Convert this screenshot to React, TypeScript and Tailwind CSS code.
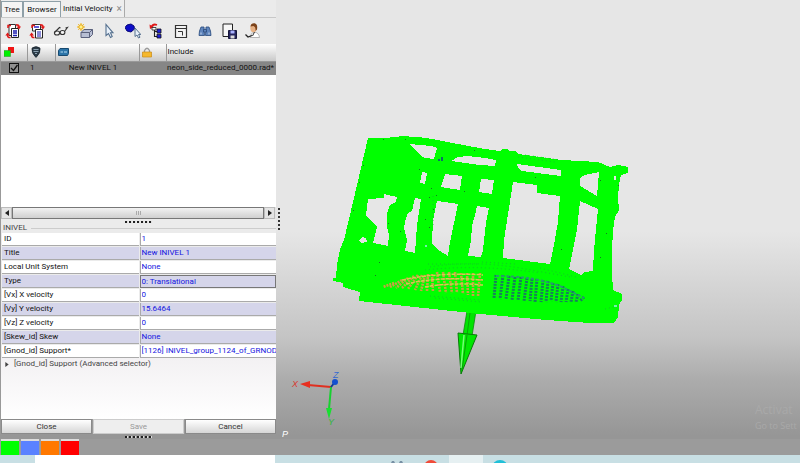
import type { ReactNode } from "react";

const fields = [
  { id: "id", label: "ID", value: "1" },
  { id: "title", label: "Title", value: "New INIVEL 1" },
  { id: "unit", label: "Local Unit System", value: "None" },
  { id: "type", label: "Type", value: "0: Translational", active: true },
  { id: "vx", label: "[Vx] X velocity", value: "0" },
  { id: "vy", label: "[Vy] Y velocity", value: "15.6464" },
  { id: "vz", label: "[Vz] Z velocity", value: "0" },
  { id: "skew", label: "[Skew_id] Skew", value: "None" },
  { id: "gnod", label: "[Gnod_id] Support*", value: "[1126] INIVEL_group_1124_of_GRNOD" },
];

const swatches = [
  { name: "Green", color: "bg-[#00ff00]" },
  { name: "Blue", color: "bg-[#5a82ff]" },
  { name: "Orange", color: "bg-[#ff7800]" },
  { name: "Red", color: "bg-[#ff0000]" },
];

function Icon({ children }: { children: ReactNode }) {
  return (
    <svg viewBox="0 0 16 16" className="block h-4 w-4" fill="none" aria-hidden="true">
      {children}
    </svg>
  );
}

const redArrows = (
  <>
    <path d="M3 5 V2.5 H6" stroke="#e01818" strokeWidth="1.5" />
    <path d="M11 2 Q14 1.5 14 4" stroke="#e01818" strokeWidth="1.6" />
    <path d="M11.5 3.5 H16 L14 6.5Z" fill="#e01818" />
    <path d="M5.5 14.5 Q2.5 15 2.5 12" stroke="#e01818" strokeWidth="1.6" />
    <path d="M.3 12.5 H5 L2.6 9.5Z" fill="#e01818" />
  </>
);

const tools = [
  {
    name: "Import list",
    art: (
      <>
        <path d="M4 1.5 H10.5 V12.5 H4Z" fill="#fff" stroke="#333" />
        <path d="M6.5 5.5 H13.5 V14.5 H6.5Z" fill="#fff" stroke="#222" />
        <path d="M8 8 H12 M8 10 H12 M8 12.5 H12" stroke="#1b1bb0" strokeWidth="1.3" />
        {redArrows}
      </>
    ),
  },
  {
    name: "Export list",
    art: (
      <>
        <path d="M3.5 1.5 H11.5 V8 H3.5Z" fill="#fff" stroke="#333" />
        <path d="M5 4 H10" stroke="#2a2ad0" strokeWidth="1.5" />
        <path d="M6.5 6.5 H13.5 V15 H6.5Z" fill="#fff" stroke="#222" />
        <path d="M8 9 H12 M8 11 H12 M8 13 H12" stroke="#1b1bb0" strokeWidth="1.2" />
        {redArrows}
      </>
    ),
  },
  {
    name: "View",
    art: (
      <g stroke="#333" strokeWidth="1.1">
        <ellipse cx="4" cy="10" rx="2.6" ry="2" fill="#f5f5f5" />
        <ellipse cx="9.5" cy="9.5" rx="2.4" ry="2" fill="#f5f5f5" />
        <path d="M6.5 9.5 Q7 8.5 7.5 9 M1.5 9.5 L6.5 4.5 L7.5 5 M11.5 8.5 L14.5 4.5 L12.5 5" />
      </g>
    ),
  },
  {
    name: "Create",
    art: (
      <>
        <path d="M4 9.5 L7 6.5 H15.5 V11.5 L12.5 14.5 H4Z" fill="#b8bfd4" stroke="#5a617c" />
        <path d="M4 9.5 H12.5 V14.5 M12.5 9.5 L15.5 6.5" stroke="#5a617c" />
        <path d="M4 0 V8 M0 4 H8 M1.2 1.2 L6.8 6.8 M6.8 1.2 L1.2 6.8" stroke="#efb71d" />
        <circle cx="4" cy="4" r="2.2" fill="#fff08a" stroke="#e8a812" />
      </>
    ),
  },
  {
    name: "Select",
    art: (
      <path
        d="M5 1.5 V12.5 L7.5 10.5 L9.5 14.5 L11.2 13.5 L9.5 9.8 H12Z"
        fill="#e9f1fa"
        stroke="#55708e"
        strokeWidth="1.1"
      />
    ),
  },
  {
    name: "Pick part",
    art: (
      <>
        <path d="M0 4.5 L2 2 L6 1 L9 3 L9.5 6 L6 9 L2 8Z" fill="#0c0cc8" stroke="#080878" />
        <path d="M10 5 V13.5 L12 12 L13.5 15 L15 14.2 L13.5 11.5 H15.8Z" fill="#e9f1fa" stroke="#55708e" />
      </>
    ),
  },
  {
    name: "Tree",
    art: (
      <>
        <path d="M8 2 Q4 .5 2.5 4" stroke="#e01818" strokeWidth="1.8" />
        <path d="M.5 1.5 L1 6 L5 4Z" fill="#e01818" />
        <path d="M5.5 5 V13.5 H8.5 M5.5 8.5 H8.5" stroke="#222" strokeWidth="1.1" />
        <path d="M8 6 H12 V10 H8Z M8 11.2 H12 V15 H8Z" fill="#2020d8" stroke="#111" strokeWidth=".8" />
        <path d="M3 4.5 H7 V7 H3Z" fill="#fff" stroke="#222" strokeWidth=".8" />
      </>
    ),
  },
  {
    name: "Form",
    art: (
      <>
        <path d="M2.5 2.5 H13.5 V14.5 H2.5Z" fill="#f3f3f3" stroke="#333" strokeWidth="1.2" />
        <path d="M2.5 5.5 H13.5 M5 8.5 H9.5 V12.5" stroke="#333" />
      </>
    ),
  },
  {
    name: "Find",
    art: (
      <g fill="#5f85bd" stroke="#284a7c" strokeWidth=".8">
        <path d="M4 4 H7 L7.5 12.5 H2 L2.5 8Z" />
        <path d="M9 4 H12 L13.5 8 L14 12.5 H8.5Z" />
        <path d="M6.5 6.5 H9.5 V9 H6.5Z" />
        <path d="M4 9.5 V11.5 M12 9.5 V11.5" stroke="#e3ecf8" />
      </g>
    ),
  },
  {
    name: "Save",
    art: (
      <>
        <path d="M2 1 H11.5 V13.5 H2Z" fill="#f7f7f7" stroke="#222" />
        <path d="M7.5 7.5 H15.5 V15.5 H7.5Z" fill="#25255e" stroke="#15153a" />
        <path d="M9.5 7.5 H13.5 V10.5 H9.5Z" fill="#aab3ff" />
        <path d="M9.5 12.5 H13.5 V15.5 H9.5Z" fill="#ddd" />
      </>
    ),
  },
  {
    name: "Check model",
    art: (
      <>
        <path d="M5 14.5 Q6 9.5 9 9 Q14 9.5 14.5 14.5Z" fill="#fff" stroke="#999" strokeWidth=".7" />
        <ellipse cx="8.5" cy="5" rx="3.2" ry="4.2" fill="#e7b184" />
        <path d="M5.5 3.5 Q6 0 9.5 .2 Q13 1 12 6.5 L10.5 8 Q11 4 8.5 3Z" fill="#7c431b" />
        <path d="M9.5 9 L7.5 13" stroke="#333" />
        <path d="M.5 11.5 L3 14 L7 12.5" stroke="#222" strokeWidth="1.3" />
      </>
    ),
  },
];

function Dots() {
  return (
    <div className="flex h-[5px] items-center justify-center gap-px" aria-hidden="true">
      {Array.from({ length: 7 }, (_, i) => (
        <span key={i} className="h-[2px] w-[3px] border-r border-[#ddd] bg-[#222]" />
      ))}
    </div>
  );
}

function Tabs() {
  return (
    <div role="tablist" className="flex h-[17px] items-end">
      <button role="tab" className="h-4 w-[22px] border border-b-0 border-[#8fa0a8] bg-[#f4f4f4]">
        Tree
      </button>
      <button role="tab" className="h-4 w-[38px] border border-b-0 border-[#8fa0a8] bg-[#f4f4f4]">
        Browser
      </button>
      <div className="flex h-[17px] items-center gap-1 border-r border-[#aaa] bg-[#eeeeee] px-[2px]">
        <button role="tab" aria-selected="true">
          Initial Velocity
        </button>
        <button aria-label="Close tab" className="text-[10px] text-[#888]">
          ×
        </button>
      </div>
    </div>
  );
}

function EntityTable() {
  return (
    <div className="h-[163px] bg-white">
      <table className="w-full table-fixed border-collapse">
        <colgroup>
          <col className="w-[26px]" />
          <col className="w-[28px]" />
          <col className="w-[84px]" />
          <col className="w-[27px]" />
          <col />
        </colgroup>
        <thead>
          <tr className="h-[17px] bg-linear-to-b from-white to-[#c9c9c9] text-left">
            <th className="border-r border-b border-[#999] p-0 pl-[3px]" aria-label="Color">
              <svg viewBox="0 0 11 10" className="block h-[10px] w-[11px]">
                <path d="M4 0 H10 V6 H4Z" fill="#f01414" />
                <path d="M0 3.5 H6.5 V9.5 H0Z" fill="#00f000" stroke="#2a8c2a" strokeWidth=".5" />
              </svg>
            </th>
            <th className="border-r border-b border-[#999] p-0 pl-[3px]" aria-label="ID">
              <svg viewBox="0 0 10 12" className="block h-3 w-[10px]">
                <path d="M1 2 Q5 -1 9 2 Q10 7 5 11.5 Q0 7 1 2Z" fill="#2b3a46" stroke="#16222c" strokeWidth=".6" />
                <path d="M2.5 3.5 H7.5 M2.5 5.5 H7.5 M4 7.5 H6" stroke="#8ba0b0" />
              </svg>
            </th>
            <th className="border-r border-b border-[#999] p-0 pl-[2px]" aria-label="Title">
              <svg viewBox="0 0 11 8" className="block h-2 w-[11px]">
                <path d="M.5 2.5 L2 .5 H10.5 V5.5 L9.5 7.5 H.5Z" fill="#2c74a8" stroke="#174a70" />
                <path d="M2.5 4 H5 M6 4 H9" stroke="#b4dcf2" />
              </svg>
            </th>
            <th className="border-r border-b border-[#999] p-0 pl-[2px]" aria-label="Locked">
              <svg viewBox="0 0 10 11" className="block h-[11px] w-[10px]">
                <path d="M2.5 6 V3.5 Q5 -1 7.5 3.5 V6" fill="none" stroke="#999" strokeWidth="1.3" />
                <path d="M.5 5 H9.5 V10 H.5Z" fill="#f5b82e" stroke="#c98a15" strokeWidth=".7" />
              </svg>
            </th>
            <th className="border-b border-[#999] p-0 pl-px font-normal">Include</th>
          </tr>
        </thead>
        <tbody>
          <tr className="h-[14px] bg-[#868686]">
            <td className="p-0 pl-2">
              <label className="grid h-[10px] w-[10px]">
                <input
                  type="checkbox"
                  defaultChecked
                  aria-label="Show New INIVEL 1"
                  className="peer col-start-1 row-start-1 appearance-none border border-[#111] bg-[#909090]"
                />
                <svg viewBox="0 0 10 10" className="col-start-1 row-start-1 hidden h-[10px] w-[10px] peer-checked:block">
                  <path d="M2 5 L4.5 7.5 L8.5 2" fill="none" stroke="#111" strokeWidth="1.3" />
                </svg>
              </label>
            </td>
            <td className="p-0 pl-[3px]">1</td>
            <td className="p-0 pr-2 text-center">New INIVEL 1</td>
            <td className="p-0" />
            <td className="p-0 pr-[2px] text-right">neon_side_reduced_0000.rad*</td>
          </tr>
        </tbody>
      </table>
    </div>
  );
}

function ScrollBar() {
  return (
    <div className="flex h-3 bg-[#e4e4e4] pr-px leading-none">
      <button aria-label="Scroll left" className="flex w-[11px] items-center justify-center border border-[#bbb]">
        <svg viewBox="0 0 4 6" className="h-[6px] w-1">
          <path d="M4 0 V6 L0 3Z" fill="#222" />
        </svg>
      </button>
      <div className="flex flex-1 items-center justify-center gap-px border border-[#777] bg-linear-to-b from-[#f2f2f2] to-[#d0d0d0]">
        <span className="h-1 w-px bg-[#aaa]" />
        <span className="h-1 w-px bg-[#aaa]" />
        <span className="h-1 w-px bg-[#aaa]" />
      </div>
      <button aria-label="Scroll right" className="flex w-[11px] items-center justify-center border border-[#bbb]">
        <svg viewBox="0 0 4 6" className="h-[6px] w-1">
          <path d="M0 0 V6 L4 3Z" fill="#222" />
        </svg>
      </button>
    </div>
  );
}

function Properties() {
  return (
    <form className="flex flex-1 flex-col">
      <div className="flex h-2 items-center gap-1 pl-[2px] text-[#444]">
        INIVEL
        <span className="h-px flex-1 bg-[#ccc]" />
      </div>
      {fields.map((f, i) => (
        <div key={f.id} className="grid h-[14px] grid-cols-2 gap-px pt-px pl-px">
          <label
            htmlFor={f.id}
            className={`flex items-center border-b border-[#aaa] pl-[2px] ${i % 2 ? "bg-[#d5d5ea]" : "bg-white"}`}
          >
            {f.label}
          </label>
          <input
            id={f.id}
            defaultValue={f.value}
            className={`min-w-0 border-b border-l pl-px text-[#1414e0] ${i % 2 ? "bg-[#d5d5ea]" : "bg-white"} ${
              f.active ? "border-t border-r border-[#777]" : "border-[#aaa]"
            }`}
          />
        </div>
      ))}
      <div className="flex-1 bg-linear-to-b from-[#f3f1f3] to-white">
        <button type="button" className="flex h-3 items-center gap-[5px] pl-1 text-[#444]">
          <svg viewBox="0 0 4 6" className="h-[5px] w-1">
            <path d="M0 0 V6 L4 3Z" fill="#444" />
          </svg>
          [Gnod_id] Support (Advanced selector)
        </button>
      </div>
      <div className="grid h-[15px] grid-cols-3 gap-px bg-[#999] text-[#333]">
        <button type="button" className="border border-[#8a8a8a] bg-linear-to-b from-white to-[#d6d6d6]">
          Close
        </button>
        <button type="button" disabled className="border border-[#ccc] bg-[#eeeeee] text-[#999]">
          Save
        </button>
        <button type="button" className="border border-[#8a8a8a] bg-linear-to-b from-white to-[#d6d6d6]">
          Cancel
        </button>
      </div>
    </form>
  );
}

const body =
  "M368 138 L387 138 L393 137 Q412 135 432 139 L458 144 L485 149 L500 151 L502 149 L507 149 L509 151 L516 151 L518 154 L562 160 L598 162 L610 167 L618 165 L628 167 V173 L621 175 L619 185 L618 198 L619 210 L615 217 L613 230 L612 250 L612 273 L613 290 L622 294 V300 L619 305 L618 317 L614 323 H590 L547 320 L480 314 L359 301 L360 292 L343 287 V283 L333 281 V278 L336 278 L337 265 L340 249 L344 240 L353 202Z";

const holes = [
  "M409 144 L432 146 L437 148 L434 159 L425 158 L420 155Z",
  "M451 161 L458 157 L467 156 L485 158 L496 160 L495 166 L480 165Z",
  "M422 172 L427 173 L425 184 L420 183Z",
  "M445 174 L462 176 L460 190 L441 187Z",
  "M481 179 L494 180 L492 194 L479 192Z",
  "M368 199 L384 198 V194 L397 197 L396 202 L390 205 L387 213 V227 L389 235 L388 246 L373 243 L377 227 L366 215Z",
  "M359 240 L362 237 L366 238 L367 242 L361 243Z",
  "M415 198 L421 199 L417 225 L415 253 L405 251 L407 240 L404 228 L405 222 L408 213 L412 211Z",
  "M437 201 L458 204 L450 242 L448 256 L437 249 L432 243 L433 220Z",
  "M477 206 L489 208 L486 222 L483 250 L481 257 L468 256 L471 240 L472 226 L475 215Z",
  "M513 182 L537 185 V193 L560 196 L558 222 L553 250 L550 264 L503 258 L504 240Z",
  "M517 164 L561 170 V176 L522 171 L518 168Z",
  "M580 178 L585 175 L599 172 L597 196 L580 186Z",
  "M580 201 L598 209 L594 250 L593 271 L585 272 L581 275 L569 269 L577 230Z",
  "M614 176 H616 V180 H614Z",
].join(" ");

// x top, y top, x bottom, y bottom of each row of nodes
const leftRows = [
  [394, 283, 383, 287], [402, 280, 390, 287], [408, 278, 396, 288], [414, 276, 402, 288],
  [418, 275, 408, 289], [422, 275, 415, 290], [425, 275, 421, 291], [428, 274, 427, 291],
  [432, 274, 433, 292], [437, 272, 440, 292], [443, 272, 446, 293], [449, 272, 452, 293],
  [455, 272, 457, 293], [461, 273, 463, 294], [467, 273, 468, 295], [473, 273, 473, 296], [480, 273, 478, 296],
];

const rightRows = [
  [496, 275, 494, 298], [503, 275, 500, 299], [509, 276, 506, 299], [515, 277, 512, 300],
  [521, 277, 518, 300], [527, 278, 524, 301], [532, 279, 530, 301], [537, 279, 535, 302],
  [543, 280, 541, 302], [548, 281, 546, 302], [553, 283, 551, 301], [558, 284, 556, 302],
  [563, 286, 561, 302], [568, 289, 566, 302], [573, 291, 571, 302], [578, 294, 576, 302], [584, 297, 580, 301],
];

const specks = [
  [383, 139], [405, 139], [363, 165], [359, 182], [353, 210], [419, 169], [431, 188], [436, 195],
  [429, 197], [433, 209], [425, 219], [429, 227], [388, 223], [400, 231], [379, 262], [375, 275],
  [464, 191], [474, 150], [535, 177], [600, 180], [606, 233], [618, 185], [561, 249], [600, 257],
];

function Viewport() {
  return (
    <main className="flex-1 overflow-hidden">
      <svg
        viewBox="282 0 518 438"
        preserveAspectRatio="xMinYMin meet"
        className="block w-full"
        role="img"
        aria-label="Model view"
      >
        <path d="M467 311 H476 L472 336 L463 335Z" fill="#00e400" stroke="#0a8c0a" strokeWidth=".8" />
        <path d="M470 313 L467 335" stroke="#0a8c0a" strokeWidth=".7" />
        <path d="M458 333 L477 335 L461 374Z" fill="#00e800" stroke="#0a7a0a" />
        <path d="M464 335 L461 368" stroke="#75ff75" strokeWidth="1.5" />
        <path d="M467 335 L462 370" stroke="#0a8c0a" strokeWidth=".8" />
        <path d={`${body} ${holes}`} fill="#00ff00" fillRule="evenodd" shapeRendering="crispEdges" />

        <g stroke="#18b830" strokeWidth=".8" strokeDasharray="1 3" fill="none">
          <path d="M428 264 H480 M430 267 Q470 260 520 268 L570 277 M425 270 Q480 264 540 273" />
          <path d="M430 296 L480 300 M435 298 L482 302 M525 155 L560 160 M518 157 L555 162" />
          <path d="M482 262 L515 264 M540 268 L576 277 M605 309 L618 306 M433 196 V225" />
        </g>
        <g stroke="#c8a044" strokeWidth="2.6" strokeDasharray="2 1">
          {leftRows.map(([x1, y1, x2, y2]) => (
            <line key={x1} x1={x1} y1={y1} x2={x2} y2={y2} />
          ))}
        </g>
        <g stroke="#d8c850" strokeWidth="1.5" strokeDasharray="4 1" fill="none">
          <path d="M402 280 Q440 272 483 275 M406 284 Q440 276 483 280 M425 287 Q450 282 483 285" />
        </g>
        <g stroke="#16805c" strokeWidth="3" strokeDasharray="2 1">
          {rightRows.map(([x1, y1, x2, y2]) => (
            <line key={x1} x1={x1} y1={y1} x2={x2} y2={y2} />
          ))}
        </g>
        <path d="M496 276 Q535 276 562 287 L584 298" stroke="#2a9a70" strokeWidth="2" strokeDasharray="3 2" fill="none" />
        {specks.map(([x, y]) => (
          <rect key={`${x}-${y}`} x={x} y={y} width="1" height="1" fill="#147820" />
        ))}
        <path d="M438 160 H443 M441 158 H444" stroke="#123c8c" strokeWidth="1.5" strokeDasharray="2 1" />
        <path d="M425 246 H427 M614 306 H617" stroke="#9ce8f0" strokeWidth="1.5" />

        <path d="M331 387 L308 385" stroke="#e03020" strokeWidth="2" />
        <path d="M300 384 L310 381 V388Z" fill="#e83020" />
        <path d="M331 387 L329 409" stroke="#18d030" strokeWidth="2" />
        <path d="M326 408 H332 L329 419Z" fill="#18e030" />
        <path d="M331 387 L335 382" stroke="#123c90" strokeWidth="2" />
        <circle cx="335" cy="382" r="3" fill="#1450d0" />
        <g fontSize="9" fontStyle="italic" className="font-['Liberation_Sans',sans-serif]">
          <text x="292" y="387" fill="#d83a30">X</text>
          <text x="333" y="378" fill="#3468d0">Z</text>
          <text x="328" y="425" fill="#28b838">Y</text>
          <text x="282" y="437" fill="#ffffff">P</text>
        </g>
        <g fill="#a9a9a9" className="font-['Open_Sans',sans-serif]">
          <text x="755" y="414" fontSize="12">Activat</text>
          <text x="755" y="429" fontSize="9">Go to Sett</text>
        </g>
      </svg>
    </main>
  );
}

function Taskbar() {
  return (
    <footer className="flex h-2 overflow-hidden bg-[#c8dfe4]">
      <div className="ml-[35px] w-[240px] bg-white" />
      <svg viewBox="275 0 240 8" className="h-2 w-[240px]">
        <path d="M449 0 H483 V8 H449Z" fill="#e6f0f2" />
        <path d="M391 8 L392 6 H394 L395 8Z M399 8 L400 6 H402 L403 8Z" fill="#7890a4" />
        <circle cx="431" cy="12" r="7" fill="#f04a38" />
        <circle cx="500" cy="13" r="8" fill="#20c0d8" />
      </svg>
    </footer>
  );
}

export default function App() {
  return (
    <div className="flex min-h-screen flex-col bg-[linear-gradient(to_bottom,#e6e6e6_0%,#e6e6e6_50%,#c4c4c4_73%,#acacac_82%,#969696_94%)] font-[Roboto,Arial,sans-serif] text-[8px] leading-[10px] text-[#111]">
      <div className="flex flex-1">
        <aside className="flex w-[276px] shrink-0 flex-col">
          <div className="flex flex-1 flex-col border-l border-[#999] bg-[#ebebeb]">
            <Tabs />
            <div className="flex h-[27px] items-center gap-2 border-t border-[#c8c8c8] pl-1">
              {tools.map((t) => (
                <button key={t.name} aria-label={t.name}>
                  <Icon>{t.art}</Icon>
                </button>
              ))}
            </div>
            <EntityTable />
            <ScrollBar />
            <Dots />
            <Properties />
          </div>
          <Dots />
        </aside>
        <div className="flex w-[6px] shrink-0 flex-col items-center gap-[2px] pt-[208px]" aria-hidden="true">
          {Array.from({ length: 6 }, (_, i) => (
            <span key={i} className="h-[2px] w-[2px] bg-[#333]" />
          ))}
        </div>
        <Viewport />
      </div>
      <div className="flex h-4 gap-[2px] bg-[#9b9b9b] pl-px">
        {swatches.map((s) => (
          <button key={s.name} aria-label={s.name} className={`w-[18px] border-t-2 border-[#ddd] ${s.color}`} />
        ))}
      </div>
      <Taskbar />
    </div>
  );
}
